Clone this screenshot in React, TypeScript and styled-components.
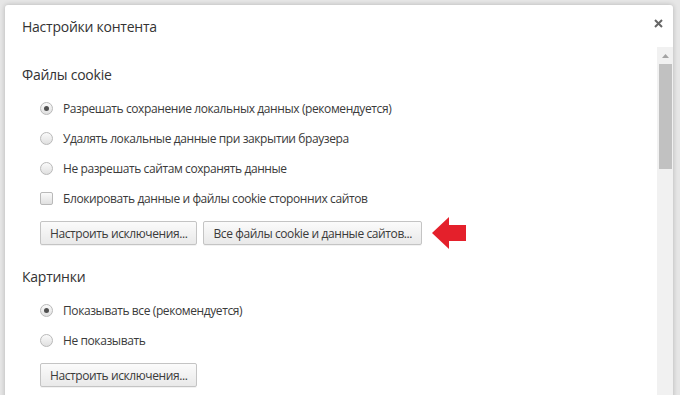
import styled, { createGlobalStyle } from "styled-components";

const GlobalStyle = createGlobalStyle`
  html, body {
    margin: 0;
    padding: 0;
    background: #e6e6e6;
  }
  body {
    font-family: "Open Sans", "Noto Sans", sans-serif;
    color: #333;
  }
`;

type Option = { label: string; checked?: boolean };

const cookieOptions: Option[] = [
  { label: "Разрешать сохранение локальных данных (рекомендуется)", checked: true },
  { label: "Удалять локальные данные при закрытии браузера" },
  { label: "Не разрешать сайтам сохранять данные" },
];

const imageOptions: Option[] = [
  { label: "Показывать все (рекомендуется)", checked: true },
  { label: "Не показывать" },
];

export default function App() {
  return (
    <>
      <GlobalStyle />
      <Page>
        <Dialog>
          <Header>
            <Title>Настройки контента</Title>
            <CloseButton aria-label="Закрыть">
              <svg width="9" height="9" viewBox="0 0 9 9">
                <path d="M1 1 L8 8 M8 1 L1 8" stroke="#666" strokeWidth="2" />
              </svg>
            </CloseButton>
          </Header>
          <Body>
            <Content>
              <Section>
                <SectionTitle>Файлы cookie</SectionTitle>
                <Options>
                  {cookieOptions.map((o) => (
                    <Row key={o.label}>
                      <Radio $checked={o.checked} />
                      <Label>{o.label}</Label>
                    </Row>
                  ))}
                  <Row>
                    <Checkbox />
                    <Label>Блокировать данные и файлы cookie сторонних сайтов</Label>
                  </Row>
                </Options>
                <ButtonRow>
                  <Button>Настроить исключения...</Button>
                  <Button>Все файлы cookie и данные сайтов...</Button>
                  <Arrow width="34" height="34" viewBox="0 0 34 34">
                    <polygon points="0,17 17,1 17,9 34,9 34,25 17,25 17,33" fill="#e4202b" />
                  </Arrow>
                </ButtonRow>
              </Section>
              <Section>
                <SectionTitle>Картинки</SectionTitle>
                <Options>
                  {imageOptions.map((o) => (
                    <Row key={o.label}>
                      <Radio $checked={o.checked} />
                      <Label>{o.label}</Label>
                    </Row>
                  ))}
                </Options>
                <ButtonRow>
                  <Button>Настроить исключения...</Button>
                </ButtonRow>
              </Section>
            </Content>
            <Scrollbar>
              <ScrollArrow>
                <svg width="7" height="4" viewBox="0 0 7 4">
                  <polygon points="0,4 3.5,0 7,4" fill="#a3a3a3" />
                </svg>
              </ScrollArrow>
              <Thumb />
            </Scrollbar>
          </Body>
        </Dialog>
      </Page>
    </>
  );
}

const Page = styled.div`
  width: 680px;
  height: 395px;
  overflow: hidden;
  padding: 5px 0 0 5px;
  box-sizing: border-box;
`;

const Dialog = styled.div`
  width: 668px;
  height: 420px;
  background: #fff;
  border-radius: 3px;
  box-shadow: 0 0 5px rgba(0, 0, 0, 0.22);
  display: flex;
  flex-direction: column;
`;

const Header = styled.div`
  height: 42px;
  display: flex;
  justify-content: space-between;
  align-items: flex-start;
  padding: 12px 10px 0 17px;
  box-sizing: border-box;
`;

const Title = styled.h1`
  margin: 0;
  font-size: 14px;
  letter-spacing: -0.25px;
  font-weight: 400;
  line-height: 20px;
  color: #333;
`;

const CloseButton = styled.button`
  border: none;
  background: none;
  padding: 0;
  margin-top: 2px;
  width: 9px;
  height: 9px;
  display: flex;
`;

const Body = styled.div`
  flex: 1;
  display: flex;
`;

const Content = styled.div`
  flex: 1;
  padding: 18px 0 0 17px;
  display: flex;
  flex-direction: column;
  gap: 22px;
`;

const Section = styled.section`
  display: flex;
  flex-direction: column;
`;

const SectionTitle = styled.h2`
  margin: 0 0 8px;
  font-size: 14px;
  letter-spacing: -0.25px;
  font-weight: 400;
  line-height: 20px;
  color: #333;
`;

const Options = styled.div`
  display: flex;
  flex-direction: column;
  padding-left: 18px;
`;

const Row = styled.div`
  height: 30px;
  display: flex;
  align-items: center;
  gap: 10px;
`;

const Radio = styled.span<{ $checked?: boolean }>`
  width: 13px;
  height: 13px;
  box-sizing: border-box;
  border-radius: 50%;
  border: 1px solid #b9b9b9;
  background: linear-gradient(#fafafa, #e0e0e0);
  display: flex;
  align-items: center;
  justify-content: center;
  &::after {
    content: "";
    width: 5px;
    height: 5px;
    border-radius: 50%;
    background: #505050;
    display: ${({ $checked }) => ($checked ? "block" : "none")};
  }
`;

const Checkbox = styled.span`
  width: 13px;
  height: 13px;
  box-sizing: border-box;
  border-radius: 2px;
  border: 1px solid #b9b9b9;
  background: linear-gradient(#fafafa, #e0e0e0);
`;

const Label = styled.span`
  font-size: 12px;
  letter-spacing: -0.4px;
  color: #3a3a3a;
  white-space: nowrap;
`;

const ButtonRow = styled.div`
  height: 24px;
  display: flex;
  align-items: center;
  gap: 6px;
  margin-top: 8px;
  padding-left: 18px;
`;

const Button = styled.button`
  height: 24px;
  padding: 0 9px;
  font-family: inherit;
  font-size: 12px;
  letter-spacing: -0.4px;
  color: #3a3a3a;
  border: 1px solid #c4c4c4;
  border-radius: 2px;
  background: linear-gradient(#fbfbfb, #e9e9e9);
  box-shadow: 0 1px 0 rgba(0, 0, 0, 0.05);
`;

const Arrow = styled.svg`
  margin: -5px 0 -5px 4px;
  flex: none;
`;

const Scrollbar = styled.div`
  width: 16px;
  background: #f1f1f1;
  display: flex;
  flex-direction: column;
  align-items: center;
`;

const ScrollArrow = styled.div`
  height: 17px;
  width: 100%;
  display: flex;
  align-items: center;
  justify-content: center;
`;

const Thumb = styled.div`
  width: 13px;
  height: 105px;
  margin-left: 1px;
  background: #c1c1c1;
`;
